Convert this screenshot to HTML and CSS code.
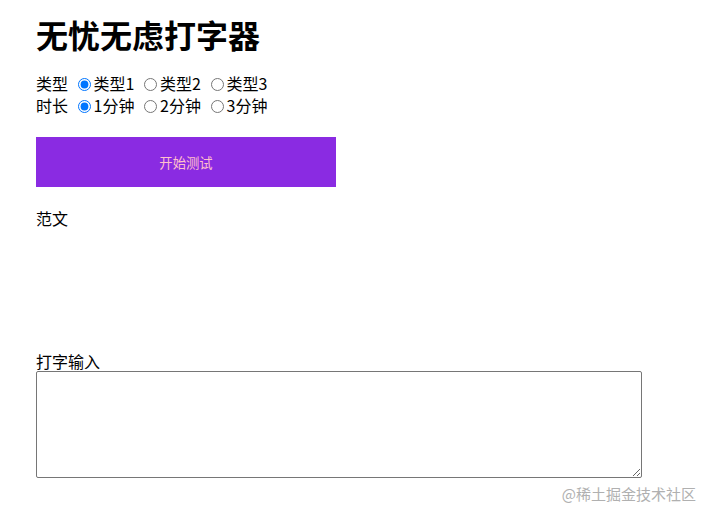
FILE: index.html
```html
<!doctype html>
<html lang="zh-CN">
    <head>
        <meta charset="UTF-8" />
        <meta name="viewport" content="width=device-width, initial-scale=1.0" />
        <title>无忧无虑打字器</title>
        <link rel="stylesheet" href="styles.css">
    </head>
    <body>
        <div class="app">
            <h1 class="title">无忧无虑打字器</h1>
            <div class="options">
                <div class="row">
                    类型
                    <input type="radio" name="type" checked />类型1
                    <input type="radio" name="type" />类型2
                    <input type="radio" name="type" />类型3
                </div>
                <div class="row">
                    时长
                    <input type="radio" name="time" checked />1分钟
                    <input type="radio" name="time" />2分钟
                    <input type="radio" name="time" />3分钟
                </div>
            </div>
            <button class="start">开始测试</button>
            <div class="label">范文</div>
            <div class="sample"></div>
            <div class="label input-label">打字输入</div>
            <textarea class="input"></textarea>
        </div>
        <div class="watermark">@稀土掘金技术社区</div>
    </body>
</html>
```

FILE: styles.css
```css
body {
    margin: 0;
    font-family: "Noto Sans CJK SC", "Microsoft YaHei", sans-serif;
    font-size: 16px;
    color: #000;
    background: #fff;
}

.app {
    padding: 12px 36px 0;
}

.title {
    margin: 0;
    font-size: 32px;
    line-height: 44px;
    font-weight: bold;
}

.options {
    margin-top: 16px;
}

.row {
    height: 22px;
    line-height: 22px;
}

.row input {
    margin: 3px 3px 0 6px;
    vertical-align: -1px;
}

.start {
    display: block;
    width: 300px;
    height: 50px;
    margin-top: 21px;
    border: none;
    background-color: #8a2be2;
    color: pink;
    font-family: "Noto Sans CJK SC", sans-serif;
    font-size: 13.33px;
}

.label {
    margin-top: 20px;
    line-height: 22px;
}

.sample {
    height: 123px;
}

.input-label {
    margin-top: 0;
    line-height: 19px;
}

.input {
    display: block;
    box-sizing: border-box;
    width: 606px;
    height: 107px;
    border: 1px solid #767676;
    border-radius: 2px;
}

.watermark {
    position: absolute;
    right: 15px;
    top: 483px;
    font-size: 15px;
    color: #b0b0b0;
}
```
